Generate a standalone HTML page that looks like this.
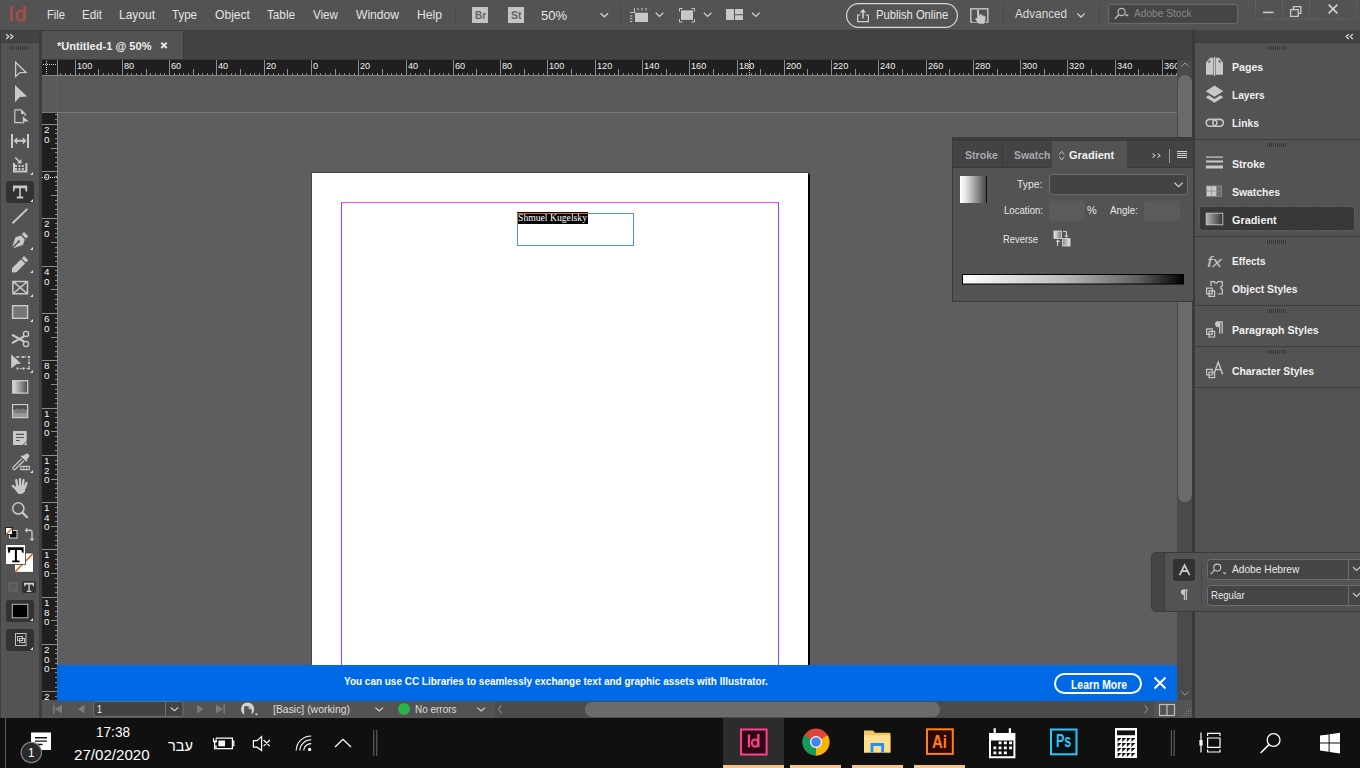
<!DOCTYPE html>
<html><head><meta charset="utf-8">
<style>
*{margin:0;padding:0;box-sizing:border-box}
html,body{width:1360px;height:768px;overflow:hidden;background:#535353;font-family:"Liberation Sans",sans-serif}
.a{position:absolute}
.t{position:absolute;line-height:1;white-space:pre}
svg{position:absolute;overflow:visible}
</style></head><body>
<div class="a" style="left:0px;top:0px;width:1360px;height:768px;background:#535353;"></div>
<div class="a" style="left:0px;top:0px;width:1360px;height:29px;background:#535353;"></div>
<div class="a" style="left:0px;top:30px;width:1360px;height:1px;background:#3c3c3c;"></div>
<svg width="40" height="30" style="left:0;top:0"><path fill="#a84e46" d="M10.2 6h2.6v15h-2.6z M23.2 6h2.6v15h-2.6z"/><ellipse cx="20.6" cy="15.6" rx="3.8" ry="4.8" fill="none" stroke="#a84e46" stroke-width="2.3"/></svg>
<div class="t" style="left:47px;top:8.00px;font-size:13px;font-weight:normal;color:#e4e4e4;font-family:'Liberation Sans';transform:scaleX(0.859);transform-origin:0 0;">File</div>
<div class="t" style="left:82px;top:8.00px;font-size:13px;font-weight:normal;color:#e4e4e4;font-family:'Liberation Sans';transform:scaleX(0.893);transform-origin:0 0;">Edit</div>
<div class="t" style="left:119px;top:8.00px;font-size:13px;font-weight:normal;color:#e4e4e4;font-family:'Liberation Sans';transform:scaleX(0.922);transform-origin:0 0;">Layout</div>
<div class="t" style="left:172px;top:8.00px;font-size:13px;font-weight:normal;color:#e4e4e4;font-family:'Liberation Sans';transform:scaleX(0.887);transform-origin:0 0;">Type</div>
<div class="t" style="left:215px;top:8.00px;font-size:13px;font-weight:normal;color:#e4e4e4;font-family:'Liberation Sans';transform:scaleX(0.931);transform-origin:0 0;">Object</div>
<div class="t" style="left:267px;top:8.00px;font-size:13px;font-weight:normal;color:#e4e4e4;font-family:'Liberation Sans';transform:scaleX(0.901);transform-origin:0 0;">Table</div>
<div class="t" style="left:313px;top:8.00px;font-size:13px;font-weight:normal;color:#e4e4e4;font-family:'Liberation Sans';transform:scaleX(0.894);transform-origin:0 0;">View</div>
<div class="t" style="left:356px;top:8.00px;font-size:13px;font-weight:normal;color:#e4e4e4;font-family:'Liberation Sans';transform:scaleX(0.930);transform-origin:0 0;">Window</div>
<div class="t" style="left:417px;top:8.00px;font-size:13px;font-weight:normal;color:#e4e4e4;font-family:'Liberation Sans';transform:scaleX(0.935);transform-origin:0 0;">Help</div>
<div class="a" style="left:455px;top:6px;width:1px;height:18px;background:#474747;"></div>
<svg width="1360" height="30" style="left:0;top:0"><rect x="472" y="7" width="16" height="16" fill="#c4c4c4"/><rect x="508" y="7" width="16" height="16" fill="#c4c4c4"/><path fill="none" stroke="#d0d0d0" stroke-width="1.3" d="M600.5 13.2l3.8 3.6l3.8 -3.6"/><rect x="620" y="5" width="1" height="19" fill="#474747"/><path fill="#c8c8c8" d="M635 12.8h13v9.2h-13z M630 12h4.6v1h-4.6z M634 8h1v5h-1z M637.5 8h1v2.4h-1z M641.5 8h1v2.4h-1z M645.5 8h1v2.4h-1z M630 15.4h2.4v1h-2.4z M630 18.3h2.4v1h-2.4z M630 21h2.4v1h-2.4z"/><path fill="none" stroke="#d0d0d0" stroke-width="1.3" d="M655.7 12.8l3.8 3.6l3.8 -3.6"/><path fill="#c8c8c8" d="M681 10.3h12v9.6h-12z"/><path fill="none" stroke="#c8c8c8" stroke-width="1" d="M679.5 11.5v-3h3 M691.5 8.5h3v3 M694.5 19v3h-3 M682.5 22h-3v-3"/><path fill="none" stroke="#d0d0d0" stroke-width="1.3" d="M703.8 12.8l3.8 3.6l3.8 -3.6"/><path fill="#c8c8c8" d="M726 9h8v11h-8z M735 9h8v5.2h-8z M735 15.2h8v4.8h-8z"/><path fill="none" stroke="#d0d0d0" stroke-width="1.3" d="M752 12.8l3.8 3.6l3.8 -3.6"/><rect x="846.6" y="3.6" width="110.8" height="23.8" rx="11.9" fill="none" stroke="#d8d8d8" stroke-width="1.2"/><path fill="none" stroke="#d0d0d0" stroke-width="1.2" d="M860.6 15h-3v6.6h10.8v-6.6h-3"/><path fill="#d0d0d0" d="M862.2 18.6v-6h-2.4l3.2 -3.6l3.2 3.6h-2.4v6z"/><rect x="970.8" y="8.8" width="17" height="13.2" fill="none" stroke="#b8b8b8" stroke-width="1.6"/><path fill="#535353" d="M972.6 20h13.6v2h-13.6z"/><path fill="#c8c8c8" d="M977 10.4a1 1 0 0 1 2 0v5.4l0.6 -0.2v-0.8a1 1 0 0 1 2 0.2l0.2 0.6a1 1 0 0 1 1.8 0.4v0.4a1 1 0 0 1 1.8 0.6v3.4l-1.4 3.4h-5.4l-3.2 -4.4a1 1 0 0 1 1.4 -1.2l0.4 0.4z"/><rect x="1003" y="5" width="1" height="19" fill="#474747"/><path fill="none" stroke="#d0d0d0" stroke-width="1.3" d="M1077.2 13.4l3.8 3.6l3.8 -3.6"/><rect x="1099" y="5" width="1" height="19" fill="#474747"/><rect x="1108.7" y="4.4" width="129" height="19" rx="2" fill="#454545" stroke="#6e6e6e" stroke-width="1"/><circle cx="1121.6" cy="12" r="3.6" fill="none" stroke="#bdbdbd" stroke-width="1.2"/><path stroke="#bdbdbd" stroke-width="1.4" d="M1118.8 14.8l-3.9 3.9"/><path fill="#bdbdbd" d="M1124.6 14.4h4.4l-2.2 2.4z"/><path fill="none" stroke="#6a6a6a" stroke-width="1" stroke-dasharray="1.5 1.5" d="M1255.5 0v17.5a1.5 1.5 0 0 0 1.5 1.5h98a1.5 1.5 0 0 0 1.5 -1.5v-17.5 M1282.5 0v19 M1309.5 0v19"/><rect x="1263" y="11.6" width="10.5" height="1.6" fill="#c8c8c8"/><path fill="none" stroke="#c8c8c8" stroke-width="1.3" d="M1290.6 9.6h7.6v6.8h-7.6z M1293.4 9.6v-3h7.4v6.8h-2.6"/><path stroke="#d0d0d0" stroke-width="1.6" d="M1328.6 4.6l8.8 8.8 M1337.4 4.6l-8.8 8.8"/></svg>
<div class="t" style="left:475px;top:10.00px;font-size:11.5px;font-weight:bold;color:#646464;font-family:'Liberation Sans';transform:scaleX(0.861);transform-origin:0 0;">Br</div>
<div class="t" style="left:511px;top:10.00px;font-size:11.5px;font-weight:bold;color:#646464;font-family:'Liberation Sans';transform:scaleX(0.913);transform-origin:0 0;">St</div>
<div class="t" style="left:541px;top:9.00px;font-size:13px;font-weight:normal;color:#e8e8e8;font-family:'Liberation Sans';transform:scaleX(0.999);transform-origin:0 0;">50%</div>
<div class="t" style="left:875.7px;top:9.00px;font-size:12.5px;font-weight:normal;color:#e8e8e8;font-family:'Liberation Sans';transform:scaleX(0.897);transform-origin:0 0;">Publish Online</div>
<div class="t" style="left:1015px;top:8.00px;font-size:12.5px;font-weight:normal;color:#dcdcdc;font-family:'Liberation Sans';transform:scaleX(0.935);transform-origin:0 0;">Advanced</div>
<div class="t" style="left:1134.4px;top:8.00px;font-size:10.5px;font-weight:normal;color:#8a8a8a;font-family:'Liberation Sans';transform:scaleX(0.967);transform-origin:0 0;">Adobe Stock</div>
<div class="a" style="left:0px;top:31px;width:1360px;height:29px;background:#434343;"></div>
<div class="a" style="left:42px;top:59px;width:1151px;height:1px;background:#3a3a3a;"></div>
<div class="a" style="left:42px;top:31px;width:141px;height:28px;background:#535353;"></div>
<div class="a" style="left:183px;top:31px;width:1px;height:28px;background:#3a3a3a;"></div>
<div class="t" style="left:56.5px;top:41.00px;font-size:11.5px;font-weight:bold;color:#eeeeee;font-family:'Liberation Sans';transform:scaleX(0.963);transform-origin:0 0;">*Untitled-1 @ 50%</div>
<svg width="20" height="20" style="left:155px;top:35px"><path stroke="#e8e8e8" stroke-width="2" d="M6.3 7.6l5.4 5.4 M11.7 7.6l-5.4 5.4"/></svg>
<div class="a" style="left:0px;top:31px;width:39px;height:687px;background:#535353;"></div>
<div class="a" style="left:0px;top:31px;width:39px;height:11px;background:#434343;"></div>
<div class="a" style="left:0px;top:42px;width:39px;height:1px;background:#3c3c3c;"></div>
<div class="a" style="left:0px;top:31px;width:1px;height:687px;background:#3e3e3e;"></div>
<div class="a" style="left:39px;top:30px;width:3px;height:688px;background:#3e3e3e;"></div>
<div class="a" style="left:6px;top:181px;width:28px;height:22px;background:#323232;border-radius:3px"></div>
<div class="a" style="left:6px;top:600px;width:28px;height:22px;background:#323232;border-radius:3px"></div>
<div class="a" style="left:6px;top:629px;width:28px;height:22px;background:#323232;border-radius:3px"></div>
<div class="a" style="left:22px;top:581px;width:14px;height:12px;background:#323232;border-radius:2px"></div>
<svg width="40" height="700" style="left:0;top:0"><path fill="#3a3a3a" d="M10 46h1v4h-1zM12 46h1v4h-1zM14 46h1v4h-1zM16 46h1v4h-1zM18 46h1v4h-1zM20 46h1v4h-1zM22 46h1v4h-1zM24 46h1v4h-1zM26 46h1v4h-1zM28 46h1v4h-1z"/><path fill="none" stroke="#d4d4d4" stroke-width="1.3" d="M6.2 34.2l2.6 2.4l-2.6 2.4 M10.2 34.2l2.6 2.4l-2.6 2.4"/><path fill="none" stroke="#c9c9c9" stroke-width="1.3" stroke-linejoin="miter" d="M15.6 62.3L26 72.5L19.9 72.6L15.6 76.6Z"/><path fill="#c9c9c9" d="M15 85L27.2 96.4L19.8 96.9L15 102.3Z"/><path fill="none" stroke="#c9c9c9" stroke-width="1.2" d="M14.8 109.8H21L25.2 114V116M22.3 122.6H14.8V109.8"/><path fill="#c9c9c9" d="M21 109.8L25.2 114H21Z M22.8 116.3L28.8 121.4L24.6 121.6L22.8 124.6Z"/><path fill="#c9c9c9" d="M11 134h2v14h-2z M27 134h2v14h-2z M13.6 140.8l3.6 -3.6v2.6h5.6v-2.6l3.6 3.6l-3.6 3.6v-2.6h-5.6v2.6z"/><path fill="#c9c9c9" d="M13 163h2v7.6h10.4v-7.6h2v9.6h-14.4z M15 165h2v2h-2z M18.4 165h2v2h-2z M21.8 165h2v2h-2z M15 168h2v2h-2z M18.4 168h2v2h-2z M21.8 168h2v2h-2z"/><path fill="none" stroke="#c9c9c9" stroke-width="1.6" d="M15.2 157.5L20.2 162.3"/><path fill="#c9c9c9" d="M21.5 159v4.5h-4.5z"/><path fill="#c9c9c9" d="M13 185.4h14.2v6.2h-1.4l-0.8 -3.4h-4.2v8.3h2.4v1.9h-6.4v-1.9h2.4v-8.3h-4.2l-0.8 3.4h-1.2z"/><path stroke="#c9c9c9" stroke-width="1.9" d="M12.5 223.2L27.4 208.9"/><path fill="#c9c9c9" d="M24 232l4.3 4.3l-2.2 2.2l-4.3 -4.3z M21 235.6l3.8 3.8l-1.8 5.6l-9.8 3.3l5.2 -5.6a1.3 1.3 0 1 0 -0.9 -0.9l-5.3 5.3l3.2 -9.8z"/><path fill="#c9c9c9" d="M24 256l4.2 4.2l-2.2 2.2l-4.2 -4.2z M21 259.2l4.2 4.2l-8.8 8.8l-4.6 0.4l0.4 -4.6z"/><path fill="none" stroke="#c9c9c9" stroke-width="1.5" d="M12.9 281.4h14.6v12.4h-14.6z M12.9 281.4L27.5 293.8 M27.5 281.4L12.9 293.8"/><rect x="12.6" y="305.7" width="15" height="12.6" fill="#777777" stroke="#c9c9c9" stroke-width="1.4"/><g fill="none" stroke="#c9c9c9" stroke-width="1.3"><circle cx="26" cy="333.9" r="2.6"/><circle cx="26" cy="343.9" r="2.6"/></g><path fill="none" stroke="#c9c9c9" stroke-width="2.2" stroke-linecap="round" d="M12.8 335.2L23.6 341.2 M12.8 342.6L23.6 336.6"/><path fill="#c9c9c9" d="M11.2 354.2L21 363.4L16.4 364.2L11.2 368.6Z"/><path fill="none" stroke="#c9c9c9" stroke-width="1" stroke-dasharray="2 1.4" d="M17.5 356.8h11.6v11.6h-11.6"/><path fill="#c9c9c9" d="M16.5 356h2v2h-2z M28 356h2v2h-2z M16.5 367.5h2v2h-2z M28 367.5h2v2h-2z M22.2 356h2v2h-2z M28 361.7h2v2h-2z M22.2 367.5h2v2h-2z"/><defs><linearGradient id="g1"><stop offset="0" stop-color="#e0e0e0"/><stop offset="1" stop-color="#4a4a4a"/></linearGradient><linearGradient id="g2" x1="0" y1="0" x2="0" y2="1"><stop offset="0" stop-color="#4a4a4a"/><stop offset="1" stop-color="#b0b0b0"/></linearGradient><linearGradient id="g3"><stop offset="0" stop-color="#ffffff"/><stop offset="1" stop-color="#000000"/></linearGradient><linearGradient id="g4"><stop offset="0" stop-color="#f4f4f4"/><stop offset="0.45" stop-color="#c8c8c8"/><stop offset="1" stop-color="#3a3a3a"/></linearGradient></defs><rect x="12.7" y="380.7" width="15" height="12.4" fill="url(#g1)" stroke="#c9c9c9" stroke-width="1.3"/><rect x="12.6" y="404.6" width="15" height="13" fill="#8a8a8a" stroke="#c9c9c9" stroke-width="1.3"/><path fill="#4e4e4e" d="M13.3 405.3h13.6v4.6h-13.6z"/><circle cx="17.4" cy="411.2" r="2.8" fill="#7a7a7a"/><circle cx="22.8" cy="411.2" r="2.8" fill="#7a7a7a"/><path fill="#9a9a9a" d="M13.3 413.2h13.6v3.8h-13.6z"/><path fill="#c9c9c9" d="M13 431h13.7v10.4l-3.7 3.7h-10z"/><path fill="#535353" d="M16 433.8h8v1.1h-8z M16 436.9h8v1.1h-8z M16 439.9h3.6v1.1h-3.6z M22.4 445.2l4.4 -4.4v4.4z"/><path fill="#c9c9c9" d="M23.4 445l3.2 -3.2v3.2z"/><path fill="#c9c9c9" d="M25.3 454.2a2.3 2.3 0 0 1 3.3 3.3l-2 2l1 1l-1.3 1.3l-5.6 -5.6l1.3 -1.3l1 1z"/><path fill="none" stroke="#c9c9c9" stroke-width="1.3" d="M21.8 458.6l-8.6 8.6a1.5 1.5 0 0 0 2.1 2.1l8.6 -8.6"/><path fill="#c9c9c9" d="M20.3 465.8h9.6v4.4h-9.6z"/><path fill="#535353" d="M21.4 466.9h2v2.2h-2z M24.3 466.9h2v2.2h-2z M27.2 466.9h1.6v2.2h-1.6z"/><path fill="#c9c9c9" d="M15.8 485.2L25.6 485.2L24.8 491.6L22 494L18.4 493.8L15.6 490.6Z"/><path fill="none" stroke="#c9c9c9" stroke-width="2.3" stroke-linecap="round" d="M16.3 480.2L17.2 486.5 M20 479.2L20.2 486.5 M23.4 480.2L22.9 486.5 M26.5 483L24.8 487.8 M12.7 485.9L17 489.6"/><circle cx="18.3" cy="508.4" r="5.6" fill="none" stroke="#c9c9c9" stroke-width="1.5"/><path stroke="#c9c9c9" stroke-width="2.2" stroke-linecap="round" d="M22.5 512.6l4.6 4.6"/><rect x="9.5" y="530.5" width="7.5" height="7.5" fill="#111" stroke="#ddd" stroke-width="1"/><rect x="5.5" y="527.5" width="7" height="7" fill="#fff" stroke="#222" stroke-width="1"/><path stroke="#e8641e" stroke-width="1.2" d="M6 534.5l6 -6"/><path fill="none" stroke="#c9c9c9" stroke-width="1.4" d="M26.4 530.2h3.6a2 2 0 0 1 2 2v6.4"/><path fill="#c9c9c9" d="M24.6 530.2l2.8 -2.6v5.2z M32 541.2l-2.6 -2.8h5.2z"/><rect x="14.6" y="553" width="18.8" height="19.3" fill="#fff" stroke="#3a3a3a" stroke-width="0.8"/><path stroke="#e8641e" stroke-width="1.6" d="M15.2 571.7L33 553.6"/><rect x="5.5" y="544.6" width="20" height="20" fill="#fff" stroke="#3a3a3a" stroke-width="0.8"/><path fill="#000" d="M7.6 547.2h16v5.6h-1.4l-0.9 -2.8h-4.4v10.4h2.6v1.8h-7.2v-1.8h2.6v-10.4h-4.4l-0.9 2.8h-1.4z"/><rect x="9" y="583" width="8" height="8" fill="#5a5a5a" stroke="#6a6a6a" stroke-width="1"/><path fill="#d0d0d0" d="M24 582.8h10v3.4h-1l-0.6 -1.8h-2.6v6.4h1.6v1.2h-4.6v-1.2h1.6v-6.4h-2.6l-0.6 1.8h-1z"/><rect x="12.3" y="604.3" width="15.5" height="13.5" fill="#000" stroke="#b8b8b8" stroke-width="1"/><rect x="15.5" y="633.5" width="10.5" height="12" fill="none" stroke="#c0c0c0" stroke-width="1"/><rect x="17.5" y="636.5" width="5" height="4" fill="none" stroke="#c0c0c0" stroke-width="1"/><rect x="19.5" y="638.5" width="5" height="4" fill="none" stroke="#c0c0c0" stroke-width="1"/><path fill="#dddddd" d="M30 175l3 -3v3zM30 202l3 -3v3zM30 250l3 -3v3zM30 273l3 -3v3zM30 297l3 -3v3zM30 322l3 -3v3zM30 373l3 -3v3zM30 473l3 -3v3zM30 621l3 -3v3zM30 650l3 -3v3z"/></svg>
<div class="a" style="left:42px;top:60px;width:1135px;height:16px;background:#1f1f1f;"></div>
<div class="a" style="left:42px;top:75px;width:1135px;height:1px;background:#8a8a8a;"></div>
<div class="a" style="left:57px;top:60px;width:1px;height:15px;background:#8a8a8a;"></div>
<div class="a" style="left:42px;top:112px;width:15px;height:588px;background:#1f1f1f;"></div>
<div class="a" style="left:57px;top:112px;width:1px;height:588px;background:#8a8a8a;"></div>
<div class="a" style="left:58px;top:76px;width:1119px;height:589px;background:#5e5e5e;"></div>
<div class="a" style="left:58px;top:76px;width:1119px;height:36px;background:#595959;"></div>
<div class="a" style="left:42px;top:76px;width:15px;height:36px;background:#5a5a5a;"></div>
<div class="a" style="left:57px;top:76px;width:1px;height:36px;background:#626262;"></div>
<div class="a" style="left:42px;top:112px;width:1135px;height:1px;background:#7a7a7a;"></div>
<div class="a" style="left:311px;top:172px;width:498px;height:1px;background:#464646;"></div>
<div class="a" style="left:311px;top:172px;width:1px;height:493px;background:#464646;"></div>
<div class="a" style="left:312px;top:173px;width:496px;height:492px;background:#ffffff;"></div>
<div class="a" style="left:808px;top:172px;width:1px;height:2px;background:#464646;"></div>
<div class="a" style="left:808px;top:174px;width:2px;height:491px;background:#000000;"></div>
<div class="a" style="left:341px;top:202px;width:438px;height:1px;background:#ff44ff;"></div>
<div class="a" style="left:341px;top:202px;width:1px;height:463px;background:#a040ff;"></div>
<div class="a" style="left:778px;top:202px;width:1px;height:463px;background:#a040ff;"></div>
<div class="t" style="left:77px;top:61.00px;font-size:9.5px;font-weight:normal;color:#f2f2f2;font-family:'Liberation Sans';transform:scaleX(0.965);transform-origin:0 0;">100</div>
<div class="t" style="left:124px;top:61.00px;font-size:9.5px;font-weight:normal;color:#f2f2f2;font-family:'Liberation Sans';transform:scaleX(0.964);transform-origin:0 0;">80</div>
<div class="t" style="left:171px;top:61.00px;font-size:9.5px;font-weight:normal;color:#f2f2f2;font-family:'Liberation Sans';transform:scaleX(0.964);transform-origin:0 0;">60</div>
<div class="t" style="left:218px;top:61.00px;font-size:9.5px;font-weight:normal;color:#f2f2f2;font-family:'Liberation Sans';transform:scaleX(0.964);transform-origin:0 0;">40</div>
<div class="t" style="left:266px;top:61.00px;font-size:9.5px;font-weight:normal;color:#f2f2f2;font-family:'Liberation Sans';transform:scaleX(0.964);transform-origin:0 0;">20</div>
<div class="t" style="left:313px;top:61.00px;font-size:9.5px;font-weight:normal;color:#f2f2f2;font-family:'Liberation Sans';transform:scaleX(0.963);transform-origin:0 0;">0</div>
<div class="t" style="left:360px;top:61.00px;font-size:9.5px;font-weight:normal;color:#f2f2f2;font-family:'Liberation Sans';transform:scaleX(0.964);transform-origin:0 0;">20</div>
<div class="t" style="left:408px;top:61.00px;font-size:9.5px;font-weight:normal;color:#f2f2f2;font-family:'Liberation Sans';transform:scaleX(0.964);transform-origin:0 0;">40</div>
<div class="t" style="left:455px;top:61.00px;font-size:9.5px;font-weight:normal;color:#f2f2f2;font-family:'Liberation Sans';transform:scaleX(0.964);transform-origin:0 0;">60</div>
<div class="t" style="left:502px;top:61.00px;font-size:9.5px;font-weight:normal;color:#f2f2f2;font-family:'Liberation Sans';transform:scaleX(0.964);transform-origin:0 0;">80</div>
<div class="t" style="left:549px;top:61.00px;font-size:9.5px;font-weight:normal;color:#f2f2f2;font-family:'Liberation Sans';transform:scaleX(0.965);transform-origin:0 0;">100</div>
<div class="t" style="left:597px;top:61.00px;font-size:9.5px;font-weight:normal;color:#f2f2f2;font-family:'Liberation Sans';transform:scaleX(0.965);transform-origin:0 0;">120</div>
<div class="t" style="left:644px;top:61.00px;font-size:9.5px;font-weight:normal;color:#f2f2f2;font-family:'Liberation Sans';transform:scaleX(0.965);transform-origin:0 0;">140</div>
<div class="t" style="left:691px;top:61.00px;font-size:9.5px;font-weight:normal;color:#f2f2f2;font-family:'Liberation Sans';transform:scaleX(0.965);transform-origin:0 0;">160</div>
<div class="t" style="left:739px;top:61.00px;font-size:9.5px;font-weight:normal;color:#f2f2f2;font-family:'Liberation Sans';transform:scaleX(0.965);transform-origin:0 0;">180</div>
<div class="t" style="left:786px;top:61.00px;font-size:9.5px;font-weight:normal;color:#f2f2f2;font-family:'Liberation Sans';transform:scaleX(0.965);transform-origin:0 0;">200</div>
<div class="t" style="left:833px;top:61.00px;font-size:9.5px;font-weight:normal;color:#f2f2f2;font-family:'Liberation Sans';transform:scaleX(0.965);transform-origin:0 0;">220</div>
<div class="t" style="left:880px;top:61.00px;font-size:9.5px;font-weight:normal;color:#f2f2f2;font-family:'Liberation Sans';transform:scaleX(0.965);transform-origin:0 0;">240</div>
<div class="t" style="left:928px;top:61.00px;font-size:9.5px;font-weight:normal;color:#f2f2f2;font-family:'Liberation Sans';transform:scaleX(0.965);transform-origin:0 0;">260</div>
<div class="t" style="left:975px;top:61.00px;font-size:9.5px;font-weight:normal;color:#f2f2f2;font-family:'Liberation Sans';transform:scaleX(0.965);transform-origin:0 0;">280</div>
<div class="t" style="left:1022px;top:61.00px;font-size:9.5px;font-weight:normal;color:#f2f2f2;font-family:'Liberation Sans';transform:scaleX(0.965);transform-origin:0 0;">300</div>
<div class="t" style="left:1069px;top:61.00px;font-size:9.5px;font-weight:normal;color:#f2f2f2;font-family:'Liberation Sans';transform:scaleX(0.965);transform-origin:0 0;">320</div>
<div class="t" style="left:1117px;top:61.00px;font-size:9.5px;font-weight:normal;color:#f2f2f2;font-family:'Liberation Sans';transform:scaleX(0.965);transform-origin:0 0;">340</div>
<div class="t" style="left:1164px;top:61.00px;font-size:9.5px;font-weight:normal;color:#f2f2f2;font-family:'Liberation Sans';transform:scaleX(0.965);transform-origin:0 0;">360</div>
<div class="t" style="left:44px;top:125.00px;font-size:9.5px;font-weight:normal;color:#f2f2f2;font-family:'Liberation Sans';transform:scaleX(1.038);transform-origin:0 0;">2</div>
<div class="t" style="left:44px;top:135.00px;font-size:9.5px;font-weight:normal;color:#f2f2f2;font-family:'Liberation Sans';transform:scaleX(1.038);transform-origin:0 0;">0</div>
<div class="t" style="left:44px;top:172.00px;font-size:9.5px;font-weight:normal;color:#f2f2f2;font-family:'Liberation Sans';transform:scaleX(1.038);transform-origin:0 0;">0</div>
<div class="t" style="left:44px;top:219.00px;font-size:9.5px;font-weight:normal;color:#f2f2f2;font-family:'Liberation Sans';transform:scaleX(1.038);transform-origin:0 0;">2</div>
<div class="t" style="left:44px;top:229.00px;font-size:9.5px;font-weight:normal;color:#f2f2f2;font-family:'Liberation Sans';transform:scaleX(1.038);transform-origin:0 0;">0</div>
<div class="t" style="left:44px;top:267.00px;font-size:9.5px;font-weight:normal;color:#f2f2f2;font-family:'Liberation Sans';transform:scaleX(1.038);transform-origin:0 0;">4</div>
<div class="t" style="left:44px;top:277.00px;font-size:9.5px;font-weight:normal;color:#f2f2f2;font-family:'Liberation Sans';transform:scaleX(1.038);transform-origin:0 0;">0</div>
<div class="t" style="left:44px;top:314.00px;font-size:9.5px;font-weight:normal;color:#f2f2f2;font-family:'Liberation Sans';transform:scaleX(1.038);transform-origin:0 0;">6</div>
<div class="t" style="left:44px;top:324.00px;font-size:9.5px;font-weight:normal;color:#f2f2f2;font-family:'Liberation Sans';transform:scaleX(1.038);transform-origin:0 0;">0</div>
<div class="t" style="left:44px;top:361.00px;font-size:9.5px;font-weight:normal;color:#f2f2f2;font-family:'Liberation Sans';transform:scaleX(1.038);transform-origin:0 0;">8</div>
<div class="t" style="left:44px;top:371.00px;font-size:9.5px;font-weight:normal;color:#f2f2f2;font-family:'Liberation Sans';transform:scaleX(1.038);transform-origin:0 0;">0</div>
<div class="t" style="left:44px;top:409.00px;font-size:9.5px;font-weight:normal;color:#f2f2f2;font-family:'Liberation Sans';transform:scaleX(1.038);transform-origin:0 0;">1</div>
<div class="t" style="left:44px;top:419.00px;font-size:9.5px;font-weight:normal;color:#f2f2f2;font-family:'Liberation Sans';transform:scaleX(1.038);transform-origin:0 0;">0</div>
<div class="t" style="left:44px;top:428.00px;font-size:9.5px;font-weight:normal;color:#f2f2f2;font-family:'Liberation Sans';transform:scaleX(1.038);transform-origin:0 0;">0</div>
<div class="t" style="left:44px;top:456.00px;font-size:9.5px;font-weight:normal;color:#f2f2f2;font-family:'Liberation Sans';transform:scaleX(1.038);transform-origin:0 0;">1</div>
<div class="t" style="left:44px;top:466.00px;font-size:9.5px;font-weight:normal;color:#f2f2f2;font-family:'Liberation Sans';transform:scaleX(1.038);transform-origin:0 0;">2</div>
<div class="t" style="left:44px;top:475.00px;font-size:9.5px;font-weight:normal;color:#f2f2f2;font-family:'Liberation Sans';transform:scaleX(1.038);transform-origin:0 0;">0</div>
<div class="t" style="left:44px;top:503.00px;font-size:9.5px;font-weight:normal;color:#f2f2f2;font-family:'Liberation Sans';transform:scaleX(1.038);transform-origin:0 0;">1</div>
<div class="t" style="left:44px;top:513.00px;font-size:9.5px;font-weight:normal;color:#f2f2f2;font-family:'Liberation Sans';transform:scaleX(1.038);transform-origin:0 0;">4</div>
<div class="t" style="left:44px;top:522.00px;font-size:9.5px;font-weight:normal;color:#f2f2f2;font-family:'Liberation Sans';transform:scaleX(1.038);transform-origin:0 0;">0</div>
<div class="t" style="left:44px;top:550.00px;font-size:9.5px;font-weight:normal;color:#f2f2f2;font-family:'Liberation Sans';transform:scaleX(1.038);transform-origin:0 0;">1</div>
<div class="t" style="left:44px;top:560.00px;font-size:9.5px;font-weight:normal;color:#f2f2f2;font-family:'Liberation Sans';transform:scaleX(1.038);transform-origin:0 0;">6</div>
<div class="t" style="left:44px;top:569.00px;font-size:9.5px;font-weight:normal;color:#f2f2f2;font-family:'Liberation Sans';transform:scaleX(1.038);transform-origin:0 0;">0</div>
<div class="t" style="left:44px;top:598.00px;font-size:9.5px;font-weight:normal;color:#f2f2f2;font-family:'Liberation Sans';transform:scaleX(1.038);transform-origin:0 0;">1</div>
<div class="t" style="left:44px;top:608.00px;font-size:9.5px;font-weight:normal;color:#f2f2f2;font-family:'Liberation Sans';transform:scaleX(1.038);transform-origin:0 0;">8</div>
<div class="t" style="left:44px;top:617.00px;font-size:9.5px;font-weight:normal;color:#f2f2f2;font-family:'Liberation Sans';transform:scaleX(1.038);transform-origin:0 0;">0</div>
<div class="t" style="left:44px;top:645.00px;font-size:9.5px;font-weight:normal;color:#f2f2f2;font-family:'Liberation Sans';transform:scaleX(1.038);transform-origin:0 0;">2</div>
<div class="t" style="left:44px;top:655.00px;font-size:9.5px;font-weight:normal;color:#f2f2f2;font-family:'Liberation Sans';transform:scaleX(1.038);transform-origin:0 0;">0</div>
<div class="t" style="left:44px;top:664.00px;font-size:9.5px;font-weight:normal;color:#f2f2f2;font-family:'Liberation Sans';transform:scaleX(1.038);transform-origin:0 0;">0</div>
<div class="t" style="left:44px;top:692.00px;font-size:9.5px;font-weight:normal;color:#f2f2f2;font-family:'Liberation Sans';transform:scaleX(1.038);transform-origin:0 0;">2</div>
<div class="t" style="left:44px;top:702.00px;font-size:9.5px;font-weight:normal;color:#f2f2f2;font-family:'Liberation Sans';transform:scaleX(1.038);transform-origin:0 0;">2</div>
<div class="t" style="left:44px;top:711.00px;font-size:9.5px;font-weight:normal;color:#f2f2f2;font-family:'Liberation Sans';transform:scaleX(1.038);transform-origin:0 0;">0</div>
<svg width="1360" height="768" style="left:0;top:0" shape-rendering="crispEdges"><path fill="#8c8c8c" d="M60 73h1v2h-1zM65 73h1v2h-1zM70 73h1v2h-1zM75 60h1v15h-1zM79 73h1v2h-1zM84 73h1v2h-1zM89 73h1v2h-1zM94 73h1v2h-1zM98 69h1v6h-1zM103 73h1v2h-1zM108 73h1v2h-1zM112 73h1v2h-1zM117 73h1v2h-1zM122 60h1v15h-1zM127 73h1v2h-1zM131 73h1v2h-1zM136 73h1v2h-1zM141 73h1v2h-1zM146 69h1v6h-1zM150 73h1v2h-1zM155 73h1v2h-1zM160 73h1v2h-1zM164 73h1v2h-1zM169 60h1v15h-1zM174 73h1v2h-1zM179 73h1v2h-1zM183 73h1v2h-1zM188 73h1v2h-1zM193 69h1v6h-1zM198 73h1v2h-1zM202 73h1v2h-1zM207 73h1v2h-1zM212 73h1v2h-1zM216 60h1v15h-1zM221 73h1v2h-1zM226 73h1v2h-1zM231 73h1v2h-1zM235 73h1v2h-1zM240 69h1v6h-1zM245 73h1v2h-1zM250 73h1v2h-1zM254 73h1v2h-1zM259 73h1v2h-1zM264 60h1v15h-1zM268 73h1v2h-1zM273 73h1v2h-1zM278 73h1v2h-1zM283 73h1v2h-1zM287 69h1v6h-1zM292 73h1v2h-1zM297 73h1v2h-1zM302 73h1v2h-1zM306 73h1v2h-1zM311 60h1v15h-1zM316 73h1v2h-1zM320 73h1v2h-1zM325 73h1v2h-1zM330 73h1v2h-1zM335 69h1v6h-1zM339 73h1v2h-1zM344 73h1v2h-1zM349 73h1v2h-1zM354 73h1v2h-1zM358 60h1v15h-1zM363 73h1v2h-1zM368 73h1v2h-1zM372 73h1v2h-1zM377 73h1v2h-1zM382 69h1v6h-1zM387 73h1v2h-1zM391 73h1v2h-1zM396 73h1v2h-1zM401 73h1v2h-1zM406 60h1v15h-1zM410 73h1v2h-1zM415 73h1v2h-1zM420 73h1v2h-1zM424 73h1v2h-1zM429 69h1v6h-1zM434 73h1v2h-1zM439 73h1v2h-1zM443 73h1v2h-1zM448 73h1v2h-1zM453 60h1v15h-1zM458 73h1v2h-1zM462 73h1v2h-1zM467 73h1v2h-1zM472 73h1v2h-1zM476 69h1v6h-1zM481 73h1v2h-1zM486 73h1v2h-1zM491 73h1v2h-1zM495 73h1v2h-1zM500 60h1v15h-1zM505 73h1v2h-1zM510 73h1v2h-1zM514 73h1v2h-1zM519 73h1v2h-1zM524 69h1v6h-1zM528 73h1v2h-1zM533 73h1v2h-1zM538 73h1v2h-1zM543 73h1v2h-1zM547 60h1v15h-1zM552 73h1v2h-1zM557 73h1v2h-1zM562 73h1v2h-1zM566 73h1v2h-1zM571 69h1v6h-1zM576 73h1v2h-1zM580 73h1v2h-1zM585 73h1v2h-1zM590 73h1v2h-1zM595 60h1v15h-1zM599 73h1v2h-1zM604 73h1v2h-1zM609 73h1v2h-1zM614 73h1v2h-1zM618 69h1v6h-1zM623 73h1v2h-1zM628 73h1v2h-1zM632 73h1v2h-1zM637 73h1v2h-1zM642 60h1v15h-1zM647 73h1v2h-1zM651 73h1v2h-1zM656 73h1v2h-1zM661 73h1v2h-1zM666 69h1v6h-1zM670 73h1v2h-1zM675 73h1v2h-1zM680 73h1v2h-1zM684 73h1v2h-1zM689 60h1v15h-1zM694 73h1v2h-1zM699 73h1v2h-1zM703 73h1v2h-1zM708 73h1v2h-1zM713 69h1v6h-1zM718 73h1v2h-1zM722 73h1v2h-1zM727 73h1v2h-1zM732 73h1v2h-1zM737 60h1v15h-1zM741 73h1v2h-1zM746 73h1v2h-1zM751 73h1v2h-1zM755 73h1v2h-1zM760 69h1v6h-1zM765 73h1v2h-1zM770 73h1v2h-1zM774 73h1v2h-1zM779 73h1v2h-1zM784 60h1v15h-1zM789 73h1v2h-1zM793 73h1v2h-1zM798 73h1v2h-1zM803 73h1v2h-1zM807 69h1v6h-1zM812 73h1v2h-1zM817 73h1v2h-1zM822 73h1v2h-1zM826 73h1v2h-1zM831 60h1v15h-1zM836 73h1v2h-1zM841 73h1v2h-1zM845 73h1v2h-1zM850 73h1v2h-1zM855 69h1v6h-1zM859 73h1v2h-1zM864 73h1v2h-1zM869 73h1v2h-1zM874 73h1v2h-1zM878 60h1v15h-1zM883 73h1v2h-1zM888 73h1v2h-1zM893 73h1v2h-1zM897 73h1v2h-1zM902 69h1v6h-1zM907 73h1v2h-1zM911 73h1v2h-1zM916 73h1v2h-1zM921 73h1v2h-1zM926 60h1v15h-1zM930 73h1v2h-1zM935 73h1v2h-1zM940 73h1v2h-1zM945 73h1v2h-1zM949 69h1v6h-1zM954 73h1v2h-1zM959 73h1v2h-1zM963 73h1v2h-1zM968 73h1v2h-1zM973 60h1v15h-1zM978 73h1v2h-1zM982 73h1v2h-1zM987 73h1v2h-1zM992 73h1v2h-1zM997 69h1v6h-1zM1001 73h1v2h-1zM1006 73h1v2h-1zM1011 73h1v2h-1zM1015 73h1v2h-1zM1020 60h1v15h-1zM1025 73h1v2h-1zM1030 73h1v2h-1zM1034 73h1v2h-1zM1039 73h1v2h-1zM1044 69h1v6h-1zM1049 73h1v2h-1zM1053 73h1v2h-1zM1058 73h1v2h-1zM1063 73h1v2h-1zM1067 60h1v15h-1zM1072 73h1v2h-1zM1077 73h1v2h-1zM1082 73h1v2h-1zM1086 73h1v2h-1zM1091 69h1v6h-1zM1096 73h1v2h-1zM1101 73h1v2h-1zM1105 73h1v2h-1zM1110 73h1v2h-1zM1115 60h1v15h-1zM1119 73h1v2h-1zM1124 73h1v2h-1zM1129 73h1v2h-1zM1134 73h1v2h-1zM1138 69h1v6h-1zM1143 73h1v2h-1zM1148 73h1v2h-1zM1153 73h1v2h-1zM1157 73h1v2h-1zM1162 60h1v15h-1zM1167 73h1v2h-1zM1171 73h1v2h-1zM1176 73h1v2h-1zM55 114h2v1h-2zM55 119h2v1h-2zM42 124h15v1h-15zM55 129h2v1h-2zM55 133h2v1h-2zM55 138h2v1h-2zM55 143h2v1h-2zM51 148h6v1h-6zM55 152h2v1h-2zM55 157h2v1h-2zM55 162h2v1h-2zM55 166h2v1h-2zM42 171h15v1h-15zM55 176h2v1h-2zM55 181h2v1h-2zM55 185h2v1h-2zM55 190h2v1h-2zM51 195h6v1h-6zM55 200h2v1h-2zM55 204h2v1h-2zM55 209h2v1h-2zM55 214h2v1h-2zM42 218h15v1h-15zM55 223h2v1h-2zM55 228h2v1h-2zM55 233h2v1h-2zM55 237h2v1h-2zM51 242h6v1h-6zM55 247h2v1h-2zM55 252h2v1h-2zM55 256h2v1h-2zM55 261h2v1h-2zM42 266h15v1h-15zM55 270h2v1h-2zM55 275h2v1h-2zM55 280h2v1h-2zM55 285h2v1h-2zM51 289h6v1h-6zM55 294h2v1h-2zM55 299h2v1h-2zM55 304h2v1h-2zM55 308h2v1h-2zM42 313h15v1h-15zM55 318h2v1h-2zM55 322h2v1h-2zM55 327h2v1h-2zM55 332h2v1h-2zM51 337h6v1h-6zM55 341h2v1h-2zM55 346h2v1h-2zM55 351h2v1h-2zM55 356h2v1h-2zM42 360h15v1h-15zM55 365h2v1h-2zM55 370h2v1h-2zM55 374h2v1h-2zM55 379h2v1h-2zM51 384h6v1h-6zM55 389h2v1h-2zM55 393h2v1h-2zM55 398h2v1h-2zM55 403h2v1h-2zM42 408h15v1h-15zM55 412h2v1h-2zM55 417h2v1h-2zM55 422h2v1h-2zM55 427h2v1h-2zM51 431h6v1h-6zM55 436h2v1h-2zM55 441h2v1h-2zM55 445h2v1h-2zM55 450h2v1h-2zM42 455h15v1h-15zM55 460h2v1h-2zM55 464h2v1h-2zM55 469h2v1h-2zM55 474h2v1h-2zM51 479h6v1h-6zM55 483h2v1h-2zM55 488h2v1h-2zM55 493h2v1h-2zM55 497h2v1h-2zM42 502h15v1h-15zM55 507h2v1h-2zM55 512h2v1h-2zM55 516h2v1h-2zM55 521h2v1h-2zM51 526h6v1h-6zM55 531h2v1h-2zM55 535h2v1h-2zM55 540h2v1h-2zM55 545h2v1h-2zM42 549h15v1h-15zM55 554h2v1h-2zM55 559h2v1h-2zM55 564h2v1h-2zM55 568h2v1h-2zM51 573h6v1h-6zM55 578h2v1h-2zM55 583h2v1h-2zM55 587h2v1h-2zM55 592h2v1h-2zM42 597h15v1h-15zM55 601h2v1h-2zM55 606h2v1h-2zM55 611h2v1h-2zM55 616h2v1h-2zM51 620h6v1h-6zM55 625h2v1h-2zM55 630h2v1h-2zM55 635h2v1h-2zM55 639h2v1h-2zM42 644h15v1h-15zM55 649h2v1h-2zM55 653h2v1h-2zM55 658h2v1h-2zM55 663h2v1h-2zM51 668h6v1h-6zM55 672h2v1h-2zM55 677h2v1h-2zM55 682h2v1h-2zM55 687h2v1h-2zM42 691h15v1h-15zM55 696h2v1h-2z"/></svg>
<div class="a" style="left:1177px;top:60px;width:15px;height:640px;background:#4a4a4a;"></div>
<div class="a" style="left:1178px;top:75px;width:14px;height:427px;background:#6a6a6a;border-radius:7px"></div>
<div class="a" style="left:1192px;top:30px;width:3px;height:688px;background:#3a3a3a;"></div>
<div class="a" style="left:1195px;top:30px;width:165px;height:688px;background:#535353;"></div>
<div class="a" style="left:1195px;top:30px;width:165px;height:12px;background:#424242;"></div>
<div class="a" style="left:1195px;top:42px;width:165px;height:1px;background:#3a3a3a;"></div>
<div class="a" style="left:1195px;top:139px;width:165px;height:1px;background:#3c3c3c;"></div>
<div class="a" style="left:1195px;top:236px;width:165px;height:1px;background:#3c3c3c;"></div>
<div class="a" style="left:1195px;top:305px;width:165px;height:1px;background:#3c3c3c;"></div>
<div class="a" style="left:1195px;top:346px;width:165px;height:1px;background:#3c3c3c;"></div>
<div class="a" style="left:1195px;top:387px;width:165px;height:1px;background:#3c3c3c;"></div>
<svg width="1360" height="768" style="left:0;top:0"><rect x="1199.5" y="206.5" width="155" height="24" rx="3" fill="#383838" stroke="#6c6c6c" stroke-width="1" stroke-dasharray="1.2 1.2"/></svg>
<svg width="1360" height="768" style="left:0;top:0"><path fill="none" stroke="#d4d4d4" stroke-width="1.3" d="M1348.8 34.2l-2.6 2.4l2.6 2.4 M1352.8 34.2l-2.6 2.4l2.6 2.4"/><path fill="#393939" d="M1267.0 46h1v4h-1zM1269.0 46h1v4h-1zM1271.0 46h1v4h-1zM1273.0 46h1v4h-1zM1275.0 46h1v4h-1zM1277.0 46h1v4h-1zM1279.0 46h1v4h-1zM1281.0 46h1v4h-1zM1283.0 46h1v4h-1zM1285.0 46h1v4h-1z"/><path fill="#393939" d="M1267.0 143h1v4h-1zM1269.0 143h1v4h-1zM1271.0 143h1v4h-1zM1273.0 143h1v4h-1zM1275.0 143h1v4h-1zM1277.0 143h1v4h-1zM1279.0 143h1v4h-1zM1281.0 143h1v4h-1zM1283.0 143h1v4h-1zM1285.0 143h1v4h-1z"/><path fill="#393939" d="M1267.0 240h1v4h-1zM1269.0 240h1v4h-1zM1271.0 240h1v4h-1zM1273.0 240h1v4h-1zM1275.0 240h1v4h-1zM1277.0 240h1v4h-1zM1279.0 240h1v4h-1zM1281.0 240h1v4h-1zM1283.0 240h1v4h-1zM1285.0 240h1v4h-1z"/><path fill="#393939" d="M1267.0 309h1v4h-1zM1269.0 309h1v4h-1zM1271.0 309h1v4h-1zM1273.0 309h1v4h-1zM1275.0 309h1v4h-1zM1277.0 309h1v4h-1zM1279.0 309h1v4h-1zM1281.0 309h1v4h-1zM1283.0 309h1v4h-1zM1285.0 309h1v4h-1z"/><path fill="#393939" d="M1267.0 350h1v4h-1zM1269.0 350h1v4h-1zM1271.0 350h1v4h-1zM1273.0 350h1v4h-1zM1275.0 350h1v4h-1zM1277.0 350h1v4h-1zM1279.0 350h1v4h-1zM1281.0 350h1v4h-1zM1283.0 350h1v4h-1zM1285.0 350h1v4h-1z"/><path fill="#c8c8c8" d="M1206 62.4l4 -4.6h3.5v17h-7.5z M1223 62.4l-4 -4.6h-3.5v17h7.5z"/><path fill="#535353" d="M1207.6 62.4l2.6 -3v3z M1221.4 62.4l-2.6 -3v3z"/><rect x="1214" y="56.8" width="1" height="19.4" fill="#c8c8c8"/><path fill="#c8c8c8" d="M1214.5 85.6l8.8 5.6l-8.8 5.6l-8.8 -5.6z M1205.7 97.2l3 -1.9l5.8 3.7l5.8 -3.7l3 1.9l-8.8 5.6z"/><rect x="1206.2" y="119.4" width="10.6" height="6.8" rx="3.4" fill="none" stroke="#c8c8c8" stroke-width="1.6"/><rect x="1212.8" y="119.4" width="10.6" height="6.8" rx="3.4" fill="none" stroke="#c8c8c8" stroke-width="1.6"/><path fill="#c8c8c8" d="M1206 156.5h17v1.2h-17z M1206 160.6h17v2h-17z M1206 165.4h17v3h-17z"/><rect x="1206" y="185.5" width="16" height="11.3" fill="#8a8a8a"/><path fill="#c8c8c8" d="M1206.8 186.3h4.4v4.4h-4.4z M1211.8 186.3h4.4v4.4h-4.4z M1206.8 191.6h4.4v4.4h-4.4z M1211.8 191.6h4.4v4.4h-4.4z"/><path fill="#6e6e6e" d="M1216.8 186.3h4.4v4.4h-4.4z M1216.8 191.6h4.4v4.4h-4.4z"/><rect x="1206.2" y="213.2" width="16.6" height="11.6" fill="url(#dg)" stroke="#c8c8c8" stroke-width="0.9"/><defs><linearGradient id="dg"><stop offset="0" stop-color="#b4b4b4"/><stop offset="1" stop-color="#333333"/></linearGradient><linearGradient id="pg"><stop offset="0" stop-color="#ffffff"/><stop offset="1" stop-color="#000000"/></linearGradient><linearGradient id="sg"><stop offset="0" stop-color="#f8f8f8"/><stop offset="0.5" stop-color="#b0b0b0"/><stop offset="1" stop-color="#2a2a2a"/></linearGradient></defs><path fill="none" stroke="#c8c8c8" stroke-width="1.2" d="M1211 286v-4.4h3.5a1.6 1.6 0 0 0 3.2 0h4.6v4.6a1.6 1.6 0 0 0 0 3.2v4.6h-4.6 M1206.6 288.2h5.6v5.6h-5.6z M1209 290.8h5.6v5.6h-5.6z"/><path fill="none" stroke="#c8c8c8" stroke-width="1.2" d="M1206.6 328.8h5.6v5.6h-5.6z M1209 331.4h5.6v5.6h-5.6z"/><path fill="#c8c8c8" d="M1217.2 321.2h5.6v12.4h-1.3v-11.2h-1.1v11.2h-1.3v-6.6a3 3 0 0 1 -1.9 -5.8z"/><path fill="none" stroke="#c8c8c8" stroke-width="1.2" d="M1206.6 369.4h5.6v5.6h-5.6z M1209 372h5.6v5.6h-5.6z"/><path fill="none" stroke="#c8c8c8" stroke-width="1.4" d="M1213.8 374.2l4.4 -12l4.4 12 M1215.6 369.6h5.2"/></svg>
<div class="a" style="left:952px;top:137px;width:242px;height:165px;background:#535353;border:1px solid #3a3a3a"></div>
<div class="a" style="left:953px;top:138px;width:240px;height:3px;background:#393939;"></div>
<svg width="1360" height="768" style="left:0;top:0"><path fill="#4a4a4a" d="M954 138.5h1v1h-1zM956 138.5h1v1h-1zM958 138.5h1v1h-1zM960 138.5h1v1h-1zM962 138.5h1v1h-1zM964 138.5h1v1h-1zM966 138.5h1v1h-1zM968 138.5h1v1h-1zM970 138.5h1v1h-1zM972 138.5h1v1h-1zM974 138.5h1v1h-1zM976 138.5h1v1h-1zM978 138.5h1v1h-1zM980 138.5h1v1h-1zM982 138.5h1v1h-1zM984 138.5h1v1h-1zM986 138.5h1v1h-1zM988 138.5h1v1h-1zM990 138.5h1v1h-1zM992 138.5h1v1h-1zM994 138.5h1v1h-1zM996 138.5h1v1h-1zM998 138.5h1v1h-1zM1000 138.5h1v1h-1zM1002 138.5h1v1h-1zM1004 138.5h1v1h-1zM1006 138.5h1v1h-1zM1008 138.5h1v1h-1zM1010 138.5h1v1h-1zM1012 138.5h1v1h-1zM1014 138.5h1v1h-1zM1016 138.5h1v1h-1zM1018 138.5h1v1h-1zM1020 138.5h1v1h-1zM1022 138.5h1v1h-1zM1024 138.5h1v1h-1zM1026 138.5h1v1h-1zM1028 138.5h1v1h-1zM1030 138.5h1v1h-1zM1032 138.5h1v1h-1zM1034 138.5h1v1h-1zM1036 138.5h1v1h-1zM1038 138.5h1v1h-1zM1040 138.5h1v1h-1zM1042 138.5h1v1h-1zM1044 138.5h1v1h-1zM1046 138.5h1v1h-1zM1048 138.5h1v1h-1zM1050 138.5h1v1h-1zM1052 138.5h1v1h-1zM1054 138.5h1v1h-1zM1056 138.5h1v1h-1zM1058 138.5h1v1h-1zM1060 138.5h1v1h-1zM1062 138.5h1v1h-1zM1064 138.5h1v1h-1zM1066 138.5h1v1h-1zM1068 138.5h1v1h-1zM1070 138.5h1v1h-1zM1072 138.5h1v1h-1zM1074 138.5h1v1h-1zM1076 138.5h1v1h-1zM1078 138.5h1v1h-1zM1080 138.5h1v1h-1zM1082 138.5h1v1h-1zM1084 138.5h1v1h-1zM1086 138.5h1v1h-1zM1088 138.5h1v1h-1zM1090 138.5h1v1h-1zM1092 138.5h1v1h-1zM1094 138.5h1v1h-1zM1096 138.5h1v1h-1zM1098 138.5h1v1h-1zM1100 138.5h1v1h-1zM1102 138.5h1v1h-1zM1104 138.5h1v1h-1zM1106 138.5h1v1h-1zM1108 138.5h1v1h-1zM1110 138.5h1v1h-1zM1112 138.5h1v1h-1zM1114 138.5h1v1h-1zM1116 138.5h1v1h-1zM1118 138.5h1v1h-1zM1120 138.5h1v1h-1zM1122 138.5h1v1h-1zM1124 138.5h1v1h-1zM1126 138.5h1v1h-1zM1128 138.5h1v1h-1zM1130 138.5h1v1h-1zM1132 138.5h1v1h-1zM1134 138.5h1v1h-1zM1136 138.5h1v1h-1zM1138 138.5h1v1h-1zM1140 138.5h1v1h-1zM1142 138.5h1v1h-1zM1144 138.5h1v1h-1zM1146 138.5h1v1h-1zM1148 138.5h1v1h-1zM1150 138.5h1v1h-1zM1152 138.5h1v1h-1zM1154 138.5h1v1h-1zM1156 138.5h1v1h-1zM1158 138.5h1v1h-1zM1160 138.5h1v1h-1zM1162 138.5h1v1h-1zM1164 138.5h1v1h-1zM1166 138.5h1v1h-1zM1168 138.5h1v1h-1zM1170 138.5h1v1h-1zM1172 138.5h1v1h-1zM1174 138.5h1v1h-1zM1176 138.5h1v1h-1zM1178 138.5h1v1h-1zM1180 138.5h1v1h-1zM1182 138.5h1v1h-1zM1184 138.5h1v1h-1zM1186 138.5h1v1h-1zM1188 138.5h1v1h-1zM1190 138.5h1v1h-1z"/></svg>
<div class="a" style="left:953px;top:167px;width:99px;height:1px;background:#3a3a3a;"></div>
<div class="a" style="left:1127px;top:167px;width:66px;height:1px;background:#3a3a3a;"></div>
<div class="a" style="left:953px;top:141px;width:240px;height:26px;background:#434343;"></div>
<div class="a" style="left:1002px;top:141px;width:1px;height:26px;background:#3a3a3a;"></div>
<div class="a" style="left:1052px;top:141px;width:75px;height:27px;background:#535353;"></div>
<svg width="1360" height="768" style="left:0;top:0"><path fill="none" stroke="#c0c0c0" stroke-width="1" d="M1059.2 154.6l2.5 -3.2l2.5 3.2 M1059.2 156.8l2.5 3.2l2.5 -3.2"/><path fill="#d0d0d0" d="M1152.6 153l3.2 2.6l-3.2 2.6v-1.2l1.8 -1.4l-1.8 -1.4z M1157.6 153l3.2 2.6l-3.2 2.6v-1.2l1.8 -1.4l-1.8 -1.4z"/><rect x="1169" y="149" width="1" height="14" fill="#9a9a9a"/><path fill="#d0d0d0" d="M1177 151h10v1h-10z M1177 153h10v1h-10z M1177 155h10v1h-10z M1177 157h10v1h-10z"/><defs><linearGradient id="sw"><stop offset="0" stop-color="#ffffff"/><stop offset="0.2" stop-color="#e8e8e8"/><stop offset="1" stop-color="#404040"/></linearGradient></defs><rect x="960" y="176" width="27" height="27" fill="url(#sw)"/><rect x="986" y="176" width="1" height="27" fill="#111"/><rect x="1049.5" y="174.5" width="138" height="20" rx="3" fill="#434343" stroke="#6c6c6c" stroke-width="1"/><path fill="none" stroke="#d0d0d0" stroke-width="1.2" d="M1174.6 182.8l4 3.8l4 -3.8"/><rect x="1049" y="200.5" width="36" height="20.5" rx="3" fill="#5b5b5b"/><rect x="1144" y="200.5" width="36" height="20.5" rx="3" fill="#5b5b5b"/><defs><linearGradient id="rv"><stop offset="0" stop-color="#e8e8e8"/><stop offset="1" stop-color="#777"/></linearGradient><linearGradient id="rv2"><stop offset="0" stop-color="#888"/><stop offset="1" stop-color="#e8e8e8"/></linearGradient></defs><rect x="1054" y="231" width="7.4" height="7.4" fill="url(#rv)" stroke="#d8d8d8" stroke-width="0.9"/><rect x="1062.6" y="238.6" width="7.4" height="7.4" fill="url(#rv2)" stroke="#d8d8d8" stroke-width="0.9"/><path fill="none" stroke="#d8d8d8" stroke-width="1" d="M1063 231.5h3.4v4.6 M1057.6 246v-4.6h2.4"/><path fill="#d8d8d8" d="M1064.4 235.6h4l-2 2.2z M1055.6 241.8l2 -2.2l2 2.2z"/><defs><linearGradient id="pg2"><stop offset="0" stop-color="#ffffff"/><stop offset="0.45" stop-color="#bdbdbd"/><stop offset="0.8" stop-color="#5e5e5e"/><stop offset="1" stop-color="#000000"/></linearGradient></defs><rect x="962.5" y="274.5" width="221" height="9.5" fill="url(#pg2)" stroke="#000" stroke-width="1"/></svg>
<div class="t" style="left:965px;top:150.00px;font-size:11.5px;font-weight:bold;color:#a9a9b0;font-family:'Liberation Sans';transform:scaleX(0.922);transform-origin:0 0;">Stroke</div>
<div class="a" style="left:1003px;top:141px;width:49px;height:26px;overflow:hidden"><div class="t" style="left:11px;top:9.00px;font-size:11.5px;font-weight:bold;color:#a9a9b0;font-family:'Liberation Sans';transform:scaleX(0.906);transform-origin:0 0;">Swatch</div></div>
<div class="t" style="left:1069.2px;top:150.00px;font-size:11.5px;font-weight:bold;color:#f2f2f2;font-family:'Liberation Sans';transform:scaleX(0.956);transform-origin:0 0;">Gradient</div>
<div class="t" style="left:1016.9px;top:179.00px;font-size:10.5px;font-weight:normal;color:#e6e6e6;font-family:'Liberation Sans';transform:scaleX(0.989);transform-origin:0 0;">Type:</div>
<div class="t" style="left:1004px;top:205.00px;font-size:10.5px;font-weight:normal;color:#e6e6e6;font-family:'Liberation Sans';transform:scaleX(0.915);transform-origin:0 0;">Location:</div>
<div class="t" style="left:1087px;top:205.00px;font-size:10.5px;font-weight:normal;color:#e6e6e6;font-family:'Liberation Sans';transform:scaleX(1.038);transform-origin:0 0;">%</div>
<div class="t" style="left:1110px;top:205.00px;font-size:10.5px;font-weight:normal;color:#e6e6e6;font-family:'Liberation Sans';transform:scaleX(0.940);transform-origin:0 0;">Angle:</div>
<div class="t" style="left:1003px;top:234.00px;font-size:10.5px;font-weight:normal;color:#e6e6e6;font-family:'Liberation Sans';transform:scaleX(0.895);transform-origin:0 0;">Reverse</div>
<div class="t" style="left:1207px;top:255.00px;font-size:14px;font-weight:normal;color:#c4c4c4;font-family:'Liberation Sans';transform:scaleX(1.377);transform-origin:0 0;font-style:italic;">fx</div>
<div class="t" style="left:1232px;top:62.00px;font-size:11.5px;font-weight:bold;color:#f0f0f0;font-family:'Liberation Sans';transform:scaleX(0.921);transform-origin:0 0;">Pages</div>
<div class="t" style="left:1232px;top:90.00px;font-size:11.5px;font-weight:bold;color:#f0f0f0;font-family:'Liberation Sans';transform:scaleX(0.879);transform-origin:0 0;">Layers</div>
<div class="t" style="left:1232px;top:118.00px;font-size:11.5px;font-weight:bold;color:#f0f0f0;font-family:'Liberation Sans';transform:scaleX(0.895);transform-origin:0 0;">Links</div>
<div class="t" style="left:1232px;top:159.00px;font-size:11.5px;font-weight:bold;color:#f0f0f0;font-family:'Liberation Sans';transform:scaleX(0.922);transform-origin:0 0;">Stroke</div>
<div class="t" style="left:1232px;top:187.00px;font-size:11.5px;font-weight:bold;color:#f0f0f0;font-family:'Liberation Sans';transform:scaleX(0.905);transform-origin:0 0;">Swatches</div>
<div class="t" style="left:1232px;top:215.00px;font-size:11.5px;font-weight:bold;color:#f0f0f0;font-family:'Liberation Sans';transform:scaleX(0.945);transform-origin:0 0;">Gradient</div>
<div class="t" style="left:1232px;top:256.00px;font-size:11.5px;font-weight:bold;color:#f0f0f0;font-family:'Liberation Sans';transform:scaleX(0.873);transform-origin:0 0;">Effects</div>
<div class="t" style="left:1232px;top:284.00px;font-size:11.5px;font-weight:bold;color:#f0f0f0;font-family:'Liberation Sans';transform:scaleX(0.900);transform-origin:0 0;">Object Styles</div>
<div class="t" style="left:1232px;top:325.00px;font-size:11.5px;font-weight:bold;color:#f0f0f0;font-family:'Liberation Sans';transform:scaleX(0.923);transform-origin:0 0;">Paragraph Styles</div>
<div class="t" style="left:1232px;top:366.00px;font-size:11.5px;font-weight:bold;color:#f0f0f0;font-family:'Liberation Sans';transform:scaleX(0.903);transform-origin:0 0;">Character Styles</div>
<div class="a" style="left:517px;top:212px;width:71px;height:12px;background:#000000;"></div>
<div class="a" style="left:517px;top:213px;width:1px;height:33px;background:#4f8ff7;"></div>
<div class="a" style="left:588px;top:213px;width:46px;height:1px;background:#4f8ff7;"></div>
<div class="a" style="left:633px;top:213px;width:1px;height:33px;background:#4f8ff7;"></div>
<div class="a" style="left:517px;top:245px;width:117px;height:1px;background:#4f8ff7;"></div>
<div class="a" style="left:518px;top:213px;width:70px;height:1px;background:#e06a10;"></div>
<div class="a" style="left:517px;top:213px;width:1px;height:11px;background:#e06a10;"></div>
<div class="t" style="left:518px;top:213.00px;font-size:10px;font-weight:normal;color:#ffffff;font-family:'Liberation Serif';transform:scaleX(0.967);transform-origin:0 0;">Shmuel Kugelsky</div>
<div class="a" style="left:749px;top:60px;width:1px;height:15px;background:transparent;border-left:1px dotted #dddddd"></div>
<div class="a" style="left:42px;top:177px;width:15px;height:1px;background:transparent;border-top:1px dotted #dddddd"></div>
<svg width="16" height="16" style="left:42px;top:60px"><path fill="none" stroke="#cfcfcf" stroke-width="1" stroke-dasharray="1 1" d="M1 4.5h13 M4.5 1v13"/></svg>
<div class="a" style="left:57px;top:665px;width:1120px;height:36px;background:#006ae6;"></div>
<div class="t" style="left:343.8px;top:676.00px;font-size:11.5px;font-weight:bold;color:#ffffff;font-family:'Liberation Sans';transform:scaleX(0.866);transform-origin:0 0;">You can use CC Libraries to seamlessly exchange text and graphic assets with Illustrator.</div>
<div class="a" style="left:1054px;top:673px;width:88px;height:21px;background:transparent;border:2px solid #ffffff;border-radius:10.5px"></div>
<div class="t" style="left:1070.5px;top:679.00px;font-size:12px;font-weight:bold;color:#ffffff;font-family:'Liberation Sans';transform:scaleX(0.866);transform-origin:0 0;">Learn More</div>
<svg width="20" height="20" style="left:1150px;top:673px"><path stroke="#fff" stroke-width="2" d="M4.5 4.5l11 11 M15.5 4.5l-11 11"/></svg>
<div class="a" style="left:42px;top:701px;width:1150px;height:17px;background:#535353;"></div>
<div class="a" style="left:495px;top:701px;width:697px;height:17px;background:#4b4b4b;"></div>
<div class="a" style="left:585px;top:702px;width:355px;height:15px;background:#6b6b6b;border-radius:7px"></div>
<div class="a" style="left:1154px;top:701px;width:38px;height:17px;background:#535353;"></div>
<svg width="1360" height="768" style="left:0;top:0"><path fill="#7a7a7a" d="M53 704.5h1.6v9h-1.6z M55 709l7 -4.5v9z M78 709l6.4 -4.5v9z M197 704.5l6.4 4.5l-6.4 4.5z M216 704.5l7 4.5l-7 4.5z M223.4 704.5h1.6v9h-1.6z"/><rect x="93.5" y="701.5" width="89.5" height="15" rx="2.5" fill="#434343" stroke="#6e6e6e" stroke-width="1"/><rect x="165" y="702" width="1" height="14" fill="#6e6e6e"/><path fill="none" stroke="#d0d0d0" stroke-width="1.2" d="M170.6 707.4l3.8 3.4l3.8 -3.4"/><circle cx="247.6" cy="709" r="6.6" fill="#d2d2d2"/><path fill="#535353" d="M244.2 706.2h4.4l3 3v7.4h-7.4z"/><path fill="#d2d2d2" d="M248.6 706.2v3h3z"/><path fill="#535353" d="M249.4 707.6l1 1h-1z"/><path fill="#d8d8d8" d="M254.6 713.6h3.6l-1.8 2z"/><path fill="none" stroke="#d0d0d0" stroke-width="1.2" d="M375.4 707.6l3.8 3.4l3.8 -3.4 M477.4 707.6l3.8 3.4l3.8 -3.4"/><circle cx="404" cy="709" r="6" fill="#2db34a"/><path fill="none" stroke="#8a8a8a" stroke-width="1.1" d="M501.6 705l-3.2 4l3.2 4 M1144.6 705l3.2 4l-3.2 4"/><rect x="1159.5" y="704.5" width="15" height="11" fill="none" stroke="#c0c0c0" stroke-width="1.2"/><rect x="1166.4" y="704.5" width="1.2" height="11" fill="#c0c0c0"/><path fill="#7a7a7a" d="M1190 715h1v1h-1zM1188 715h1v1h-1zM1186 715h1v1h-1zM1184 715h1v1h-1zM1182 715h1v1h-1zM1190 713h1v1h-1zM1188 713h1v1h-1zM1186 713h1v1h-1zM1184 713h1v1h-1zM1190 711h1v1h-1zM1188 711h1v1h-1zM1186 711h1v1h-1zM1190 709h1v1h-1zM1188 709h1v1h-1zM1190 707h1v1h-1z"/><path fill="none" stroke="#9a9a9a" stroke-width="1" d="M1181.4 66.6l3.6 -3.6l3.6 3.6 M1181.4 691.6l3.6 3.6l3.6 -3.6"/></svg>
<div class="t" style="left:97px;top:704.00px;font-size:10.5px;font-weight:normal;color:#f0f0f0;font-family:'Liberation Sans';transform:scaleX(0.856);transform-origin:0 0;">1</div>
<div class="t" style="left:273px;top:704.00px;font-size:11px;font-weight:normal;color:#dddddd;font-family:'Liberation Sans';transform:scaleX(0.947);transform-origin:0 0;">[Basic] (working)</div>
<div class="t" style="left:415px;top:704.00px;font-size:11px;font-weight:normal;color:#dddddd;font-family:'Liberation Sans';transform:scaleX(0.905);transform-origin:0 0;">No errors</div>
<div class="a" style="left:1151px;top:552px;width:215px;height:60px;background:#535353;border:1px solid #3a3a3a;border-radius:5px 0 0 5px"></div>
<div class="a" style="left:1152px;top:553px;width:12px;height:58px;background:#454545;border-radius:4px 0 0 4px"></div>
<div class="a" style="left:1164px;top:553px;width:1px;height:58px;background:#3c3c3c;"></div>
<div class="a" style="left:1173px;top:559px;width:22px;height:22px;background:#323232;border-radius:3px"></div>
<div class="a" style="left:1201px;top:559px;width:1px;height:47px;background:#474747;"></div>
<svg width="1360" height="768" style="left:0;top:0"><rect x="1207.5" y="559.5" width="160" height="20" rx="3" fill="#454545" stroke="#6c6c6c" stroke-width="1"/><rect x="1348" y="560" width="1" height="19" fill="#6c6c6c"/><rect x="1207.5" y="585.5" width="160" height="20" rx="3" fill="#454545" stroke="#6c6c6c" stroke-width="1"/><rect x="1348" y="586" width="1" height="19" fill="#6c6c6c"/><path fill="none" stroke="#c8c8c8" stroke-width="1.2" d="M1353 567l3.6 3.4l3.6 -3.4 M1353 593l3.6 3.4l3.6 -3.4"/><circle cx="1217.2" cy="567.6" r="3.5" fill="none" stroke="#c8c8c8" stroke-width="1.1"/><path stroke="#c8c8c8" stroke-width="1.2" d="M1214.6 570.2l-4 4"/><path fill="#c8c8c8" d="M1222.4 572.4h4.2l-2.1 2.2z"/><path fill="none" stroke="#cdcdcd" stroke-width="1.7" d="M1179.6 575.2L1184.6 565.2L1189.6 575.2 M1181.6 571.2h6"/><path fill="#c8c8c8" d="M1183.2 589.6h4.6v1.2h-0.8v9.2h-1.2v-9.2h-0.8v9.2h-1.2v-5a2.7 2.7 0 0 1 -0.6 -5.4z"/></svg>
<div class="t" style="left:1231.6px;top:564.00px;font-size:10.5px;font-weight:normal;color:#eaeaea;font-family:'Liberation Sans';transform:scaleX(0.970);transform-origin:0 0;">Adobe Hebrew</div>
<div class="t" style="left:1211px;top:590.00px;font-size:10.5px;font-weight:normal;color:#eaeaea;font-family:'Liberation Sans';transform:scaleX(0.914);transform-origin:0 0;">Regular</div>
<div class="a" style="left:0px;top:718px;width:1360px;height:50px;background:#101010;"></div>
<div class="a" style="left:5px;top:718px;width:1px;height:50px;background:#5a5a5a;"></div>
<div class="a" style="left:723px;top:718px;width:61px;height:50px;background:#2c2c2c;"></div>
<div class="a" style="left:723px;top:765px;width:61px;height:3px;background:#f6c58c;"></div>
<div class="a" style="left:790px;top:765px;width:51px;height:3px;background:#f6c58c;"></div>
<div class="a" style="left:852px;top:765px;width:51px;height:3px;background:#f6c58c;"></div>
<div class="a" style="left:914px;top:765px;width:51px;height:3px;background:#f6c58c;"></div>
<svg width="1360" height="768" style="left:0;top:0"><path fill="#ffffff" d="M31 732.6h20v17.4h-12l-3.6 3.4v-3.4h-4.4z"/><path fill="#101010" d="M35 737h12v1.4h-12z M35 740.4h12v1.4h-12z M35 743.8h7.6v1.4h-7.6z"/><circle cx="31.3" cy="752.5" r="10.2" fill="#2a2a2a" stroke="#8a8a8a" stroke-width="1.1"/><path fill="none" stroke="#fff" stroke-width="1.2" d="M216 738.2h16.4v10.4h-16.4v-3.4 M232.4 741.2h1.4v4.4h-1.4 M214.6 749.6v-7.4"/><path fill="#fff" d="M218.4 740.6h6.6v5.6h-6.6z M213 738h1v2.4h-1z M215.6 738h1v2.4h-1z M212.6 740.4h4.4v1.6l-1.2 0.8h-2z"/><path fill="none" stroke="#fff" stroke-width="1.2" d="M253.4 740.6h3.6l4.6 -4v14l-4.6 -3.4h-3.6z M263.6 740l6.2 6.2 M269.8 740l-6.2 6.2"/><path fill="none" stroke="#fff" stroke-width="1.1" d="M296.2 750.4a15 15 0 0 1 15 -14.4 M299.8 750.4a11.2 11.2 0 0 1 11.4 -10.6 M303.6 750.4a7.4 7.4 0 0 1 7.6 -6.8"/><circle cx="309.6" cy="749.4" r="1.6" fill="#fff"/><path fill="none" stroke="#fff" stroke-width="1.3" d="M335 747l8 -7.6l8 7.6"/><rect x="373.3" y="730" width="1" height="26" fill="#6a6a6a"/><rect x="376.3" y="730" width="1" height="26" fill="#6a6a6a"/><rect x="741" y="729.5" width="25.6" height="25" fill="#2a0a10" stroke="#ff3f94" stroke-width="2"/><circle cx="816" cy="742" r="13.5" fill="#db4437"/><path fill="#0f9d58" d="M816 742L804.3 735.25A13.5 13.5 0 0 0 809.25 753.7Z"/><path fill="#0f9d58" d="M816 742L809.25 753.7A13.5 13.5 0 0 0 816 755.5Z"/><path fill="#f4b400" d="M816 742L829.5 742A13.5 13.5 0 0 1 816 755.5Z"/><path fill="#f4b400" d="M816 742L827.7 735.25A13.5 13.5 0 0 1 829.5 742Z"/><circle cx="816" cy="742" r="6" fill="#fff"/><circle cx="816" cy="742" r="4.8" fill="#4285f4"/><path fill="#f0c75e" d="M864 730.5h9l2 2.2h15.4v19.8h-26.4z"/><path fill="#ffdf8a" d="M864 735.2h26.4v17.3h-26.4z"/><path fill="#1e90ff" d="M870.6 743h13.4v9.6h-2.8v-6.6h-7.8v6.6h-2.8z"/><rect x="927" y="729.3" width="25.8" height="24.6" fill="#2a0a00" stroke="#ff7f18" stroke-width="2"/><path fill="none" stroke="#fff" stroke-width="2" d="M990 734h24.4v23.2h-24.4z"/><path fill="#fff" d="M990 734h24.4v6.4h-24.4z M993.6 728.2h2.2v6h-2.2z M1008.8 728.2h2.2v6h-2.2z"/><path fill="#fff" d="M998.6 741.4h2.9v2.9h-2.9zM1003.9 741.4h2.9v2.9h-2.9zM1009.1 741.4h2.9v2.9h-2.9zM993.4 746.4h2.9v2.9h-2.9zM998.6 746.4h2.9v2.9h-2.9zM1003.9 746.4h2.9v2.9h-2.9zM1009.1 746.4h2.9v2.9h-2.9zM993.4 751.4h2.9v2.9h-2.9zM998.6 751.4h2.9v2.9h-2.9zM1003.9 751.4h2.9v2.9h-2.9z"/><rect x="1051" y="729.5" width="25.5" height="24.8" fill="#06121a" stroke="#31c5f0" stroke-width="2"/><path fill="#fff" d="M1115 728h22v30h-22z"/><path fill="#101010" d="M1117 730.4h18v4.8h-18z"/><path fill="#101010" d="M1117.6 738l4 0l-4 4zM1122.1999999999998 738l4 0l-4 4zM1126.8 738l4 0l-4 4zM1131.3999999999999 738l4 0l-4 4zM1117.6 743l4 0l-4 4zM1122.1999999999998 743l4 0l-4 4zM1126.8 743l4 0l-4 4zM1131.3999999999999 743l4 0l-4 4zM1117.6 748l4 0l-4 4zM1122.1999999999998 748l4 0l-4 4zM1126.8 748l4 0l-4 4zM1131.3999999999999 748l4 0l-4 4zM1117.6 753l4 0l-4 4zM1122.1999999999998 753l4 0l-4 4zM1126.8 753l4 0l-4 4zM1131.3999999999999 753l4 0l-4 4z"/><rect x="1170.8" y="730" width="1" height="26" fill="#6a6a6a"/><rect x="1173.6" y="730" width="1" height="26" fill="#6a6a6a"/><path fill="none" stroke="#fff" stroke-width="1.2" d="M1201 732.6v19.8 M1207.6 736v-2.6h12.4v2.6 M1207.6 749.4v2.6h12.4v-2.6 M1207.6 738h12.4v9.4h-12.4z"/><rect x="1199.4" y="740" width="3.2" height="5.6" fill="#fff"/><circle cx="1273.6" cy="740" r="6.4" fill="none" stroke="#fff" stroke-width="1.3"/><path stroke="#fff" stroke-width="1.5" d="M1269 744.6l-8.4 8.4"/><path fill="#fff" d="M1320 735.6l8.6 -1.2v8.2h-8.6z M1329.6 734.2l10.4 -1.4v9.8h-10.4z M1320 743.6h8.6v8.2l-8.6 -1.2z M1329.6 743.6h10.4v9.8l-10.4 -1.4z"/></svg>
<div class="t" style="left:27.5px;top:746.00px;font-size:13px;font-weight:normal;color:#ffffff;font-family:'Liberation Sans';transform:scaleX(0.898);transform-origin:0 0;">1</div>
<div class="t" style="left:96px;top:725.00px;font-size:14.5px;font-weight:normal;color:#ffffff;font-family:'Liberation Sans';transform:scaleX(0.937);transform-origin:0 0;">17:38</div>
<div class="t" style="left:74px;top:748.00px;font-size:14.5px;font-weight:normal;color:#ffffff;font-family:'Liberation Sans';transform:scaleX(1.042);transform-origin:0 0;">27/02/2020</div>
<div class="t" style="left:168px;top:738.00px;font-size:15px;font-weight:normal;color:#ffffff;font-family:'Liberation Sans';transform:scaleX(0.972);transform-origin:0 0;">עבר</div>
<svg width="1360" height="768" style="left:0;top:0"><path fill="#ff3f94" d="M747.8 734.5h2.3v12.8h-2.3z M757.2 734h2.3v13.3h-2.3z"/><ellipse cx="755" cy="743.1" rx="3.1" ry="3.7" fill="none" stroke="#ff3f94" stroke-width="2"/></svg>
<div class="t" style="left:932px;top:734.00px;font-size:17.5px;font-weight:bold;color:#ff7f18;font-family:'Liberation Sans';transform:scaleX(0.857);transform-origin:0 0;">Ai</div>
<div class="t" style="left:1056px;top:733.00px;font-size:17.5px;font-weight:bold;color:#31c5f0;font-family:'Liberation Sans';transform:scaleX(0.715);transform-origin:0 0;">Ps</div>
</body></html>
